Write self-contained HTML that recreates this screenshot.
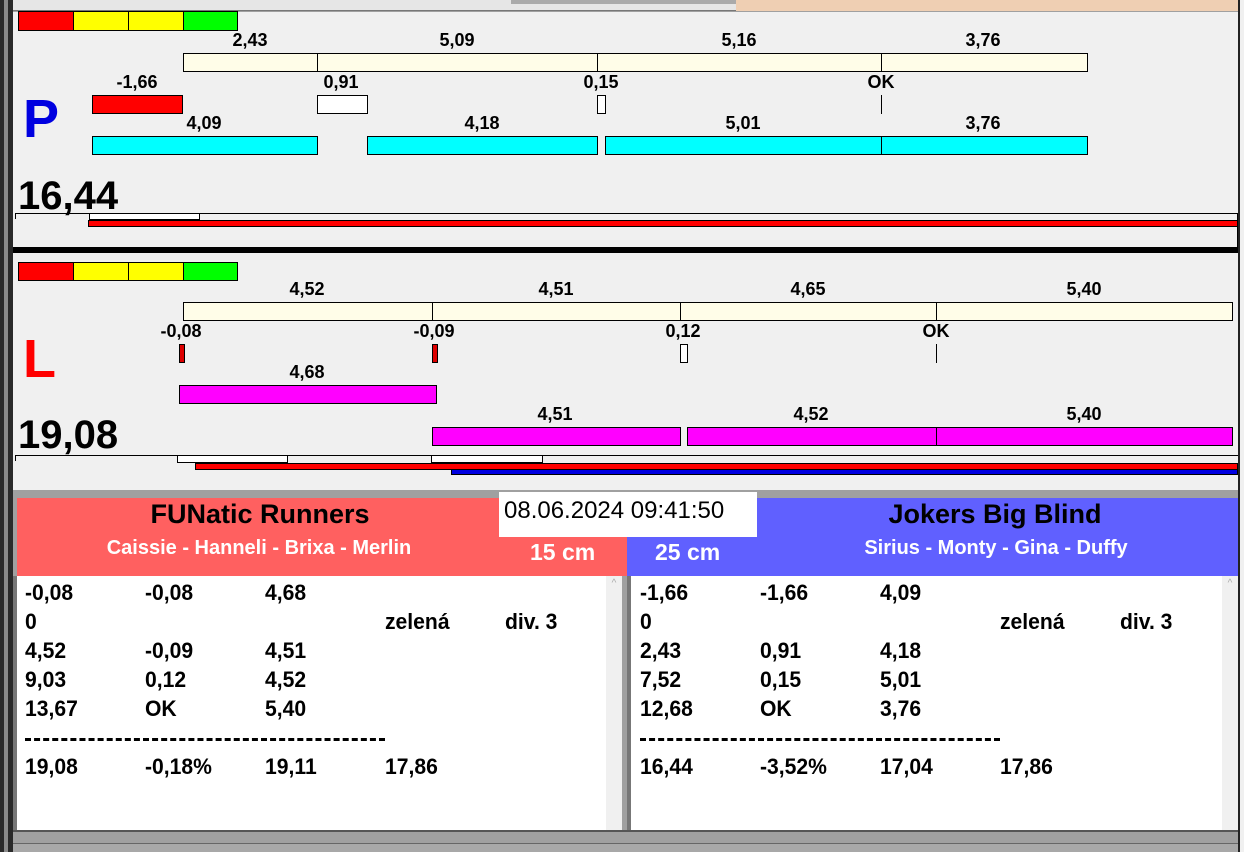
<!DOCTYPE html>
<html><head><meta charset="utf-8"><style>
*{margin:0;padding:0;box-sizing:border-box}
body{width:1244px;height:852px;position:relative;overflow:hidden;background:#a0a0a0;font-family:"Liberation Sans",Arial,sans-serif}
div{position:absolute}
.b{border:1px solid #000}
.t{font-weight:bold;font-size:18px;color:#000;transform:translateX(-50%);white-space:nowrap;line-height:17px}
.r{font-weight:bold;font-size:22px;line-height:22px;white-space:nowrap;transform:scaleX(.96);transform-origin:left}
</style></head><body>
<div style="left:0;top:0;width:13px;height:852px;background:#2a2a2a"></div>
<div style="left:4px;top:0;width:4px;height:852px;background:#8a8a8a"></div>
<div style="left:13px;top:0;width:1231px;height:11px;background:#e6e6e6;border-bottom:1px solid #777"></div>
<div style="left:736px;top:0;width:504px;height:11px;background:#efcfb3"></div>
<div style="left:511px;top:0;width:225px;height:4px;background:#aaa"></div>
<div style="left:1238px;top:0;width:6px;height:852px;background:#f0f0f0;border-left:2px solid #222"></div>
<div style="left:13px;top:12px;width:1225px;height:235px;background:#f0f0f0"></div>
<div style="left:13px;top:247px;width:1225px;height:6px;background:#000"></div>
<div style="left:13px;top:253px;width:1225px;height:237px;background:#f0f0f0"></div>

<div class="b" style="left:18px;top:11px;width:56px;height:20px;background:#f00"></div>
<div class="b" style="left:73px;top:11px;width:56px;height:20px;background:#ff0"></div>
<div class="b" style="left:128px;top:11px;width:56px;height:20px;background:#ff0"></div>
<div class="b" style="left:183px;top:11px;width:55px;height:20px;background:#0f0"></div>

<div class="t" style="left:250px;top:32px">2,43</div>
<div class="t" style="left:457px;top:32px">5,09</div>
<div class="t" style="left:739px;top:32px">5,16</div>
<div class="t" style="left:983px;top:32px">3,76</div>
<div class="b" style="left:183px;top:53px;width:905px;height:19px;background:#fffde8"></div>
<div style="left:317px;top:53px;width:1px;height:19px;background:#000"></div>
<div style="left:597px;top:53px;width:1px;height:19px;background:#000"></div>
<div style="left:881px;top:53px;width:1px;height:19px;background:#000"></div>

<div class="t" style="left:137px;top:74px">-1,66</div>
<div class="t" style="left:341px;top:74px">0,91</div>
<div class="t" style="left:601px;top:74px">0,15</div>
<div class="t" style="left:881px;top:74px">OK</div>
<div class="b" style="left:92px;top:95px;width:91px;height:19px;background:#f00"></div>
<div class="b" style="left:317px;top:95px;width:51px;height:19px;background:#fff"></div>
<div class="b" style="left:597px;top:95px;width:9px;height:19px;background:#fff"></div>
<div style="left:881px;top:95px;width:1px;height:19px;background:#000"></div>

<div class="t" style="left:204px;top:115px">4,09</div>
<div class="t" style="left:482px;top:115px">4,18</div>
<div class="t" style="left:743px;top:115px">5,01</div>
<div class="t" style="left:983px;top:115px">3,76</div>
<div class="b" style="left:92px;top:136px;width:226px;height:19px;background:#0ff"></div>
<div class="b" style="left:367px;top:136px;width:231px;height:19px;background:#0ff"></div>
<div class="b" style="left:605px;top:136px;width:277px;height:19px;background:#0ff"></div>
<div class="b" style="left:881px;top:136px;width:207px;height:19px;background:#0ff"></div>

<div style="left:23px;top:88px;font-size:54px;font-weight:bold;color:#0000e0;line-height:62px">P</div>
<div style="left:18px;top:173px;font-size:40px;font-weight:bold;line-height:46px">16,44</div>

<div style="left:15px;top:213px;width:1223px;height:1px;background:#000"></div>
<div style="left:15px;top:213px;width:1px;height:6px;background:#000"></div>
<div style="left:1237px;top:213px;width:1px;height:34px;background:#000"></div>
<div class="b" style="left:89px;top:213px;width:111px;height:7px;background:#fff"></div>
<div class="b" style="left:88px;top:220px;width:1150px;height:7px;background:#f00"></div>

<div class="b" style="left:18px;top:262px;width:56px;height:19px;background:#f00"></div>
<div class="b" style="left:73px;top:262px;width:56px;height:19px;background:#ff0"></div>
<div class="b" style="left:128px;top:262px;width:56px;height:19px;background:#ff0"></div>
<div class="b" style="left:183px;top:262px;width:55px;height:19px;background:#0f0"></div>

<div class="t" style="left:307px;top:281px">4,52</div>
<div class="t" style="left:556px;top:281px">4,51</div>
<div class="t" style="left:808px;top:281px">4,65</div>
<div class="t" style="left:1084px;top:281px">5,40</div>
<div class="b" style="left:183px;top:302px;width:1050px;height:19px;background:#fffde8"></div>
<div style="left:432px;top:302px;width:1px;height:19px;background:#000"></div>
<div style="left:680px;top:302px;width:1px;height:19px;background:#000"></div>
<div style="left:936px;top:302px;width:1px;height:19px;background:#000"></div>

<div class="t" style="left:181px;top:323px">-0,08</div>
<div class="t" style="left:434px;top:323px">-0,09</div>
<div class="t" style="left:683px;top:323px">0,12</div>
<div class="t" style="left:936px;top:323px">OK</div>
<div class="b" style="left:179px;top:344px;width:6px;height:19px;background:#d00"></div>
<div class="b" style="left:432px;top:344px;width:6px;height:19px;background:#d00"></div>
<div class="b" style="left:680px;top:344px;width:8px;height:19px;background:#fff"></div>
<div style="left:936px;top:344px;width:1px;height:19px;background:#000"></div>

<div class="t" style="left:307px;top:364px">4,68</div>
<div class="b" style="left:179px;top:385px;width:258px;height:19px;background:#f0f"></div>
<div class="t" style="left:555px;top:406px">4,51</div>
<div class="t" style="left:811px;top:406px">4,52</div>
<div class="t" style="left:1084px;top:406px">5,40</div>
<div class="b" style="left:432px;top:427px;width:249px;height:19px;background:#f0f"></div>
<div class="b" style="left:687px;top:427px;width:250px;height:19px;background:#f0f"></div>
<div class="b" style="left:936px;top:427px;width:297px;height:19px;background:#f0f"></div>

<div style="left:23px;top:328px;font-size:54px;font-weight:bold;color:#f00;line-height:62px">L</div>
<div style="left:18px;top:412px;font-size:40px;font-weight:bold;line-height:46px">19,08</div>

<div style="left:15px;top:455px;width:1223px;height:1px;background:#000"></div>
<div style="left:15px;top:455px;width:1px;height:6px;background:#000"></div>
<div class="b" style="left:177px;top:455px;width:111px;height:8px;background:#fff"></div>
<div class="b" style="left:431px;top:455px;width:112px;height:8px;background:#fff"></div>
<div class="b" style="left:195px;top:463px;width:1043px;height:7px;background:#f00"></div>
<div style="left:451px;top:469px;width:787px;height:6px;background:#0000e0;border:1px solid #000"></div>

<div style="left:17px;top:498px;width:610px;height:78px;background:#ff6060"></div>
<div style="left:627px;top:498px;width:611px;height:78px;background:#6060ff"></div>
<div style="left:260px;top:499px;transform:translateX(-50%);font-size:27px;font-weight:bold;white-space:nowrap">FUNatic Runners</div>
<div style="left:259px;top:537px;transform:translateX(-50%);font-size:20px;font-weight:bold;color:#fff;white-space:nowrap">Caissie - Hanneli - Brixa - Merlin</div>
<div style="left:530px;top:539px;font-size:23px;font-weight:bold;color:#fff">15 cm</div>
<div style="left:655px;top:539px;font-size:23px;font-weight:bold;color:#fff">25 cm</div>
<div style="left:995px;top:499px;transform:translateX(-50%);font-size:27px;font-weight:bold;white-space:nowrap">Jokers Big Blind</div>
<div style="left:996px;top:537px;transform:translateX(-50%);font-size:20px;font-weight:bold;color:#fff;white-space:nowrap">Sirius - Monty - Gina - Duffy</div>
<div style="left:499px;top:492px;width:258px;height:45px;background:#fff;font-size:24px;line-height:38px;padding-left:5px;white-space:nowrap">08.06.2024 09:41:50</div>

<div style="left:17px;top:576px;width:605px;height:254px;background:#fff"></div>
<div style="left:606px;top:576px;width:16px;height:254px;background:#f0f0f0;color:#aaa;font-size:10px;text-align:center;line-height:16px">^</div>
<div style="left:631px;top:576px;width:607px;height:254px;background:#fff"></div>
<div style="left:1222px;top:576px;width:16px;height:254px;background:#f0f0f0;color:#aaa;font-size:10px;text-align:center;line-height:16px">^</div>
<div style="left:13px;top:576px;width:4px;height:256px;background:#777"></div>
<div style="left:627px;top:576px;width:4px;height:256px;background:#777"></div>
<div style="left:13px;top:830px;width:1225px;height:2px;background:#555"></div>
<div style="left:13px;top:843px;width:1225px;height:9px;background:#a8a8a8;border-top:1px solid #666"></div>

<div class="r" style="left:25px;top:582px">-0,08</div><div class="r" style="left:145px;top:582px">-0,08</div><div class="r" style="left:265px;top:582px">4,68</div>
<div class="r" style="left:25px;top:611px">0</div><div class="r" style="left:385px;top:611px">zelená</div><div class="r" style="left:505px;top:611px">div. 3</div>
<div class="r" style="left:25px;top:640px">4,52</div><div class="r" style="left:145px;top:640px">-0,09</div><div class="r" style="left:265px;top:640px">4,51</div>
<div class="r" style="left:25px;top:669px">9,03</div><div class="r" style="left:145px;top:669px">0,12</div><div class="r" style="left:265px;top:669px">4,52</div>
<div class="r" style="left:25px;top:698px">13,67</div><div class="r" style="left:145px;top:698px">OK</div><div class="r" style="left:265px;top:698px">5,40</div>
<div style="left:25px;top:738px;width:360px;height:0;border-top:3px dashed #000"></div>
<div class="r" style="left:25px;top:756px">19,08</div><div class="r" style="left:145px;top:756px">-0,18%</div><div class="r" style="left:265px;top:756px">19,11</div><div class="r" style="left:385px;top:756px">17,86</div>

<div class="r" style="left:640px;top:582px">-1,66</div><div class="r" style="left:760px;top:582px">-1,66</div><div class="r" style="left:880px;top:582px">4,09</div>
<div class="r" style="left:640px;top:611px">0</div><div class="r" style="left:1000px;top:611px">zelená</div><div class="r" style="left:1120px;top:611px">div. 3</div>
<div class="r" style="left:640px;top:640px">2,43</div><div class="r" style="left:760px;top:640px">0,91</div><div class="r" style="left:880px;top:640px">4,18</div>
<div class="r" style="left:640px;top:669px">7,52</div><div class="r" style="left:760px;top:669px">0,15</div><div class="r" style="left:880px;top:669px">5,01</div>
<div class="r" style="left:640px;top:698px">12,68</div><div class="r" style="left:760px;top:698px">OK</div><div class="r" style="left:880px;top:698px">3,76</div>
<div style="left:640px;top:738px;width:360px;height:0;border-top:3px dashed #000"></div>
<div class="r" style="left:640px;top:756px">16,44</div><div class="r" style="left:760px;top:756px">-3,52%</div><div class="r" style="left:880px;top:756px">17,04</div><div class="r" style="left:1000px;top:756px">17,86</div>
</body></html>
